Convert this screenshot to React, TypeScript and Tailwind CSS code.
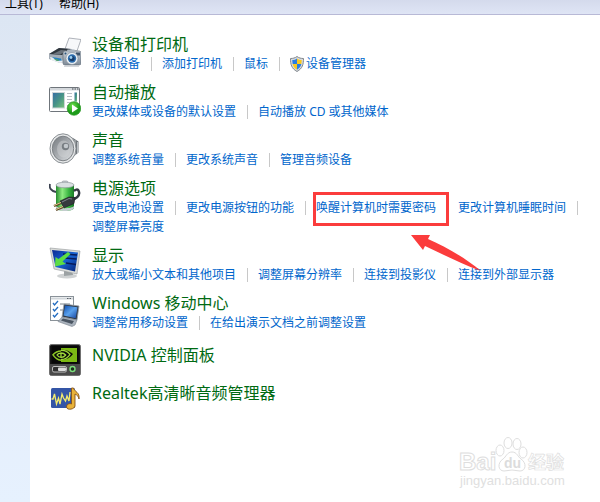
import type { ReactNode } from 'react'

type Item = { label: string; shield?: boolean; marked?: boolean }
type Group = { title: string; icon: ReactNode; links: Item[] }

function PrinterIcon() {
  return (
    <svg viewBox="0 0 32 32" className="h-8 w-8" aria-hidden>
      <defs>
        <linearGradient id="cam" x1="0" y1="0" x2="0" y2="1">
          <stop offset="0" stopColor="#c9d0d8" />
          <stop offset="1" stopColor="#7e8a97" />
        </linearGradient>
      </defs>
      <path d="M16 13 20 2l12 1.500L28 15z" fill="#f7f8fa" stroke="#9aa0a8" strokeWidth=".8" />
      <path d="M0 18 10 12l13 1-3 12-9 2L0 23z" fill="#a3acb6" />
      <path d="M0 18 10 12l12 1-9 6z" fill="#2f363d" />
      <path d="m4 18 8-4 6 .6-7 4z" fill="#6c747d" />
      <path d="m1 21 11 2 3 3-4 1-9-3z" fill="#e9eef3" />
      <path d="m3 21 9 1.500 1 2-5 .5z" fill="#2a80bd" />
      <path d="m5 23 4 .5 1 1.500-3-.4z" fill="#5fae55" />
      <rect x="14" y="15" width="18" height="14" rx="2" fill="url(#cam)" stroke="#66707c" strokeWidth=".7" />
      <rect x="18" y="13.500" width="8" height="3" rx="1" fill="#aab4bf" />
      <rect x="27" y="16.500" width="4" height="3" fill="#40546b" />
      <circle cx="16.500" cy="17.500" r="1" fill="#2c567d" />
      <circle cx="23" cy="22.500" r="6" fill="#eef3f7" stroke="#7d8996" strokeWidth=".6" />
      <circle cx="23" cy="22.500" r="4.200" fill="#2b6cac" />
      <circle cx="23" cy="22.500" r="2.600" fill="#163c6b" />
      <circle cx="22" cy="21.500" r="1.400" fill="#9fd2f5" />
      <path d="M15 30.500h15" stroke="#d5d8dc" />
    </svg>
  )
}

function AutoPlayIcon() {
  return (
    <svg viewBox="0 0 32 32" className="h-8 w-8" aria-hidden>
      <defs>
        <linearGradient id="pic" x1="0" y1="0" x2="1" y2="1">
          <stop offset="0" stopColor="#376fa5" />
          <stop offset=".5" stopColor="#479387" />
          <stop offset="1" stopColor="#77c07c" />
        </linearGradient>
        <radialGradient id="play" cx=".4" cy=".3">
          <stop offset="0" stopColor="#6fe04e" />
          <stop offset="1" stopColor="#1d9b1a" />
        </radialGradient>
      </defs>
      <rect x=".5" y="3.500" width="30" height="24" rx="1" fill="#fff" stroke="#6f757b" />
      <rect x="1" y="4" width="29" height="2.500" fill="#d4d8dc" />
      <path d="M23 5h1.500M25.500 5h1.500M28 5h1.500" stroke="#454b51" />
      <rect x="3" y="8" width="13" height="16.500" fill="#cfd5d8" />
      <rect x="4" y="9" width="11" height="14.500" fill="url(#pic)" />
      <path d="M18 9.500h5M18 12.500h5M18 15.500h5M18 18.500h5M18 21.500h2" stroke="#b9bec3" />
      <rect x="25.500" y="8.500" width="2.500" height="9" fill="url(#pic)" />
      <circle cx="25" cy="24.500" r="6.800" fill="url(#play)" stroke="#2b9a25" strokeWidth=".7" />
      <path d="m23 20.500 6 4-6 4z" fill="#fff" />
    </svg>
  )
}

function SpeakerIcon() {
  return (
    <svg viewBox="0 0 32 32" className="h-8 w-8" aria-hidden>
      <defs>
        <linearGradient id="cone" x1="0" y1="0" x2="1" y2="1">
          <stop offset="0" stopColor="#74797e" />
          <stop offset=".6" stopColor="#b2b6ba" />
          <stop offset="1" stopColor="#e3e5e7" />
        </linearGradient>
      </defs>
      <path d="M17 3.500 24 6l5.500 3.500v11L24 25l-6 4z" fill="#70767b" />
      <path d="M26 8v15M28.500 10v11" stroke="#b9bec2" />
      <ellipse cx="14" cy="16.500" rx="13" ry="14.700" fill="#e6e8e9" stroke="#8b9094" />
      <ellipse cx="14" cy="16.500" rx="10.700" ry="12.300" fill="url(#cone)" stroke="#7d8286" />
      <ellipse cx="14.500" cy="17" rx="6.500" ry="8.500" fill="#d2d5d7" opacity=".45" />
      <circle cx="16.500" cy="14.500" r="3.700" fill="#777d82" />
      <circle cx="17" cy="14" r="2.300" fill="#c3c8cc" />
    </svg>
  )
}

function PowerIcon() {
  return (
    <svg viewBox="0 0 32 32" className="h-8 w-8" aria-hidden>
      <defs>
        <linearGradient id="cell" x1="0" y1="0" x2="1" y2="0">
          <stop offset="0" stopColor="#268b2f" />
          <stop offset=".35" stopColor="#8deb80" />
          <stop offset=".7" stopColor="#3bb743" />
          <stop offset="1" stopColor="#1b7b28" />
        </linearGradient>
      </defs>
      <path d="M1 4c-1 4 1 7 6 8" fill="none" stroke="#3b4250" strokeWidth="1.800" />
      <rect x="13" y="1" width="6" height="3" rx="1.500" fill="#cdd4d8" stroke="#868e95" strokeWidth=".6" />
      <path d="M7 5v23c1 4 17 4 18 0V5z" fill="url(#cell)" />
      <ellipse cx="16" cy="5" rx="9" ry="2.800" fill="#d9e0e1" stroke="#8e979c" strokeWidth=".7" />
      <path d="M7 28c1 4 17 4 18 0v-2c-2 3-16 3-18 0z" fill="#c4cdcf" />
      <path d="M22 20c5-1 9-4 8-8s-4-2-5-1" fill="none" stroke="#343943" strokeWidth="2.500" />
      <path d="m11 21 9-4 6 .5-1 6-10 4.500z" fill="#35383d" stroke="#17191c" strokeWidth=".6" />
      <path d="m13 22 7-3.500 3 .5" fill="none" stroke="#7f858c" />
      <path d="m5 26 7-3M7 30l7-3" stroke="#5d4829" strokeWidth="2.400" />
      <path d="m5 25.500 7-3M7 29.500l7-3" stroke="#e5cd91" />
    </svg>
  )
}

function DisplayIcon() {
  return (
    <svg viewBox="0 0 32 32" className="h-8 w-8" aria-hidden>
      <defs>
        <linearGradient id="screen" x1="0" y1="0" x2="1" y2="1">
          <stop offset="0" stopColor="#0b2a93" />
          <stop offset=".5" stopColor="#1763d4" />
          <stop offset="1" stopColor="#062173" />
        </linearGradient>
      </defs>
      <ellipse cx="18" cy="29" rx="10" ry="2.500" fill="#cfd2d3" />
      <path d="m15 22 8 1 1 5-9 1z" fill="#9ca2a4" />
      <path d="m1 1 30 3-3 23L5 22z" fill="#d9dbd8" stroke="#92979a" strokeWidth=".6" />
      <path d="m3 3 26 2.500-3 19L6.500 20z" fill="url(#screen)" />
      <path d="m14 7 14 1M16 11l11.500 1M17 16l10 1.500" stroke="#071b5b" strokeWidth="1.500" />
      <path d="m19 5 2.500 2-8 7.500 3.500 2.500L6 19.500 6.500 10l3 2z" fill="#5cdd43" />
    </svg>
  )
}

function MobilityIcon() {
  return (
    <svg viewBox="0 0 32 32" className="h-8 w-8" aria-hidden>
      <defs>
        <linearGradient id="lap" x1="0" y1="0" x2="1" y2="1">
          <stop offset="0" stopColor="#0d4cae" />
          <stop offset=".5" stopColor="#5ba2ed" />
          <stop offset="1" stopColor="#1745a0" />
        </linearGradient>
      </defs>
      <rect x="1.500" y="1.500" width="23" height="24" fill="#fff" stroke="#8a9299" />
      <path d="M2 3.500h22" stroke="#d1d6da" strokeWidth="2" />
      <path d="M18 3.500h1.500M20.500 3.500h1.500" stroke="#555d65" />
      <path d="m4 8 1.500 2L9 6M4 14l1.500 2L9 12M4 20l1.500 2L9 18" fill="none" stroke="#236cc0" strokeWidth="1.300" />
      <path d="M11 9h10M11 15h3" stroke="#7a8289" />
      <path d="m15 9 15 2-2 14-15-3z" fill="#303a47" stroke="#9aa3ac" strokeWidth=".8" />
      <path d="m16 10.500 12.500 1.700-1.800 11L14.500 20.500z" fill="url(#lap)" />
      <path d="m13 22 15 3-2 5-3 1.500-14-5z" fill="#a9b2bc" stroke="#78818b" strokeWidth=".6" />
      <path d="m14 23.500 11 2.500-2 3-11-3.500z" fill="#4a5562" />
    </svg>
  )
}

function NvidiaIcon() {
  return (
    <svg viewBox="0 0 32 32" className="h-8 w-8" aria-hidden>
      <rect x=".5" y=".5" width="31" height="31" rx="2" fill="#171717" stroke="#707070" />
      <rect x="2.500" y="2" width="27" height="17.500" fill="#080808" />
      <path d="M12 4h16v14H12z" fill="#7cba14" />
      <path d="M3 10.500C8 4.500 17 4 24 10c-5 7-15 8-21 .5Z" fill="#080808" />
      <path d="M12 7c-3 0-6 1.500-8 3.800 2 3 5 5 8 5.500" fill="none" stroke="#8bc525" strokeWidth="1.500" />
      <path d="M12 6.500c4-.3 7 1.500 9 4-2 3-5.500 5-9 5" fill="none" stroke="#9ed83a" strokeWidth="1.300" />
      <path d="M12 9c-2 .2-3.500 1.200-4 2 1 1.500 2.500 2.300 4 2.300V9c3 0 4 1.200 4.700 2-1 1.300-2.500 2.500-4.700 2.300" fill="none" stroke="#9ed83a" strokeWidth="1.300" />
      <rect x="1" y="20" width="30" height="11" fill="#4a4a4a" />
      <rect x="3.500" y="22.500" width="14" height="5.500" rx="1.500" fill="#303030" stroke="#bdbdbd" />
      <rect x="9" y="23.500" width="8" height="3.500" rx="1" fill="#dedede" />
      <circle cx="23.500" cy="25" r="2.500" fill="#1b2e1b" stroke="#7bdc7b" strokeWidth="1.400" />
    </svg>
  )
}

function RealtekIcon() {
  return (
    <svg viewBox="0 0 32 32" className="h-8 w-8" aria-hidden>
      <rect x="2" y="6" width="24" height="20" rx="1.500" fill="#3455a6" />
      <path
        d="M2.500 17h1.500l1.500-5 2 10 2-6 1.500 6 2-10 1.500 4 2 3 1.500-5 2 5 1-9"
        fill="none"
        stroke="#f4ec6d"
        strokeWidth="1.300"
      />
      <path
        d="M22.500 6h2c1 4 6.500 4 5.500 11-.5-3-2-4-4-5v12c0 3-8 5-8.500 1 0-3 3-4 5-3z"
        fill="#e8b23a"
        stroke="#87541b"
        strokeWidth=".9"
      />
    </svg>
  )
}

function ShieldIcon() {
  return (
    <svg viewBox="0 0 16 16" className="mr-px -ml-px h-4 w-4" aria-hidden>
      <path d="M8 .5C6 2 4 2.500 1.500 2.500c0 6 1 10 6.500 13 5.500-3 6.500-7 6.500-13C12 2.500 10 2 8 .5Z" fill="#d7dade" stroke="#81878d" />
      <path d="M8 2.500C6.500 3.500 5 4 3.300 4c0 1.500.1 2.800.4 4H8z" fill="#2b7de0" />
      <path d="M8 2.500c1.500 1 3 1.500 4.700 1.500 0 1.500-.1 2.800-.4 4H8z" fill="#fbc91d" />
      <path d="M3.700 8H8v5.700C5.500 12.200 4.200 10.300 3.700 8Z" fill="#fbc91d" />
      <path d="M12.300 8H8v5.700c2.500-1.500 3.800-3.400 4.300-5.700Z" fill="#2b7de0" />
    </svg>
  )
}

const groups: Group[] = [
  {
    title: '设备和打印机',
    icon: <PrinterIcon />,
    links: [{ label: '添加设备' }, { label: '添加打印机' }, { label: '鼠标' }, { label: '设备管理器', shield: true }],
  },
  {
    title: '自动播放',
    icon: <AutoPlayIcon />,
    links: [{ label: '更改媒体或设备的默认设置' }, { label: '自动播放 CD 或其他媒体' }],
  },
  {
    title: '声音',
    icon: <SpeakerIcon />,
    links: [{ label: '调整系统音量' }, { label: '更改系统声音' }, { label: '管理音频设备' }],
  },
  {
    title: '电源选项',
    icon: <PowerIcon />,
    links: [
      { label: '更改电池设置' },
      { label: '更改电源按钮的功能' },
      { label: '唤醒计算机时需要密码', marked: true },
      { label: '更改计算机睡眠时间' },
      { label: '调整屏幕亮度' },
    ],
  },
  {
    title: '显示',
    icon: <DisplayIcon />,
    links: [
      { label: '放大或缩小文本和其他项目' },
      { label: '调整屏幕分辨率' },
      { label: '连接到投影仪' },
      { label: '连接到外部显示器' },
    ],
  },
  {
    title: 'Windows 移动中心',
    icon: <MobilityIcon />,
    links: [{ label: '调整常用移动设置' }, { label: '在给出演示文档之前调整设置' }],
  },
]

const vendorPanels = [
  { title: 'NVIDIA 控制面板', icon: <NvidiaIcon /> },
  { title: 'Realtek高清晰音频管理器', icon: <RealtekIcon /> },
]

// Red frame and arrow over the highlighted task
function Callout() {
  return (
    <>
      <span className="pointer-events-none absolute -top-[6px] -left-[3px] h-[34px] w-[136px] border-3 border-[#fb3c3c]" />
      <svg
        viewBox="0 0 72 38"
        className="pointer-events-none absolute top-[37px] left-[94px] z-10 h-[38px] w-[72px]"
        aria-hidden
      >
        <path d="M1 0h19l-2 4c18 8 36 18 53 32C52 29 34 20 15 11l-2 4z" fill="#fb3c3c" />
      </svg>
    </>
  )
}

function TaskLink({ item, last }: { item: Item; last: boolean }) {
  return (
    <li className="relative flex items-center">
      {item.shield && <ShieldIcon />}
      <a href="#" className="whitespace-nowrap hover:underline">
        {item.label}
      </a>
      {!last && <span className="mr-[10px] ml-[11px] h-[14px] w-px bg-[#c8c8c8]" />}
      {item.marked && <Callout />}
    </li>
  )
}

function Watermark() {
  return (
    <svg
      viewBox="0 0 112 56"
      className="pointer-events-none absolute right-[30px] bottom-[10px] h-14 w-28"
      aria-hidden
    >
      <g fill="#fff" stroke="#dedede" strokeWidth="1">
        <text x="1" y="34" fontSize="24" fontWeight="700" fontFamily="Liberation Sans, sans-serif">
          Bai
        </text>
        <path d="M54 16c-5 0-6 5-9 7-6 4-5 12 1 12 3 0 5-1 8-1s5 1 8 1c6 0 7-8 1-12-3-2-4-7-9-7Z" />
        <ellipse cx="42" cy="14.500" rx="4" ry="5.500" />
        <ellipse cx="50" cy="7" rx="4" ry="5.500" />
        <ellipse cx="59" cy="8" rx="4" ry="5.500" />
        <ellipse cx="65" cy="16.500" rx="4" ry="5.500" />
        <text x="46" y="32" fontSize="14" fontWeight="700" fontFamily="Liberation Sans, sans-serif" fill="#dcdcdc" stroke="none">
          du
        </text>
        <text x="70" y="33" fontSize="18" fontWeight="700" fontFamily="Noto Sans CJK SC, sans-serif" strokeWidth=".7">
          经验
        </text>
      </g>
      <text x="2" y="49" fontSize="13" fontFamily="Liberation Sans, sans-serif" fill="#e0e0e0">
        jingyan.baidu.com
      </text>
    </svg>
  )
}

export default function App() {
  return (
    <div className="relative flex min-h-screen flex-col overflow-hidden bg-white font-['Noto_Sans','Noto_Sans_CJK_SC',sans-serif]">
      <nav className="flex h-[15px] items-end gap-4 border-b border-[#b8b9d6] bg-linear-to-b from-[#d4daec] to-[#dfe5f5] pl-[5px] text-xs text-black">
        <button type="button" className="leading-5">
          工具(T)
        </button>
        <button type="button" className="leading-5">
          帮助(H)
        </button>
      </nav>

      <div className="flex flex-1">
        <aside className="w-[30px] shrink-0 bg-linear-to-b from-[#dce6f3] via-[#e6ecf8] to-[#e6f1fe]" />
        <main className="flex-1 pt-[19px] pl-[19px]">
          <div className="flex flex-col gap-[9px]">
            {groups.map((g) => (
              <section key={g.title} className="flex gap-[11px]">
                <div className="shrink-0 pt-[2px]">{g.icon}</div>
                <div className="flex-1 pt-px">
                  <h2 className="text-base leading-[18px] text-[#006a12]">{g.title}</h2>
                  <ul className="flex flex-wrap pt-px text-xs leading-[19px] text-[#0066cc]">
                    {g.links.map((item, i) => (
                      <TaskLink key={item.label} item={item} last={i === g.links.length - 1} />
                    ))}
                  </ul>
                </div>
              </section>
            ))}
          </div>

          <div className="mt-3 flex flex-col gap-[6px]">
            {vendorPanels.map((p) => (
              <section key={p.title} className="flex gap-[11px]">
                {p.icon}
                <h2 className="pt-[2px] text-base leading-[18px] text-[#006a12]">{p.title}</h2>
              </section>
            ))}
          </div>
        </main>
      </div>

      <Watermark />
    </div>
  )
}
